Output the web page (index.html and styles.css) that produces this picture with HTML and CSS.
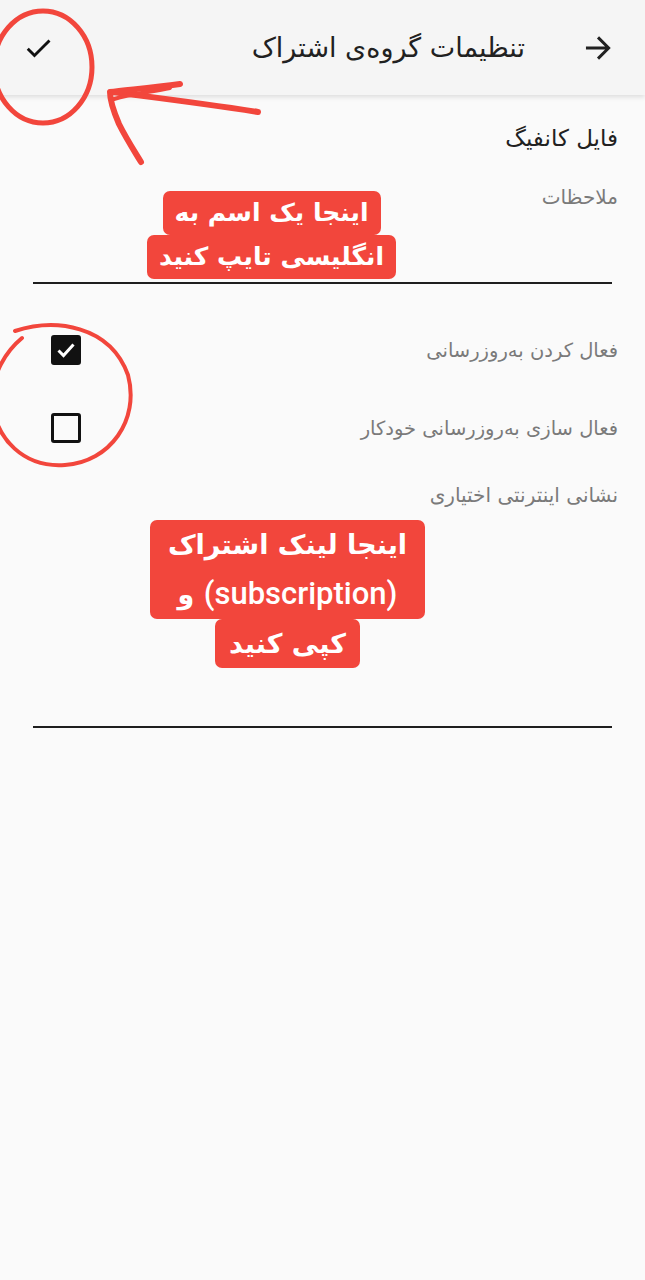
FILE: index.html
```html
<!DOCTYPE html>
<html lang="fa" dir="rtl">
<head>
<meta charset="utf-8">
<link rel="stylesheet" href="styles.css">
</head>
<body>
<div class="page">
  <header class="appbar">
    <svg class="back" viewBox="0 0 24 24" width="34" height="34"><path d="M3.5 12h16M12 4.5l7.5 7.5-7.5 7.5" fill="none" stroke="#212121" stroke-width="2.1"/></svg>
    <h1 class="title">تنظیمات گروه‌ی اشتراک</h1>
    <svg class="done" viewBox="0 0 24 24" width="36" height="36"><path d="M4.5 12.5l4.5 4.5 10-10" fill="none" stroke="#111" stroke-width="1.9"/></svg>
  </header>

  <main class="content">
    <div class="config">فایل کانفیگ</div>

    <section class="field field-remarks">
      <div class="label">ملاحظات</div>
      <div class="line"></div>
    </section>

    <div class="row row-first">
      <span class="row-text">فعال کردن به‌روزرسانی</span>
      <span class="box checked"><svg viewBox="0 0 24 24" width="24" height="24"><path d="M4.5 12.5l5 5 10-11" fill="none" stroke="#fff" stroke-width="3"/></svg></span>
    </div>
    <div class="row">
      <span class="row-text">فعال سازی به‌روزرسانی خودکار</span>
      <span class="box"></span>
    </div>

    <section class="field field-url">
      <div class="label">نشانی اینترنتی اختیاری</div>
      <div class="line"></div>
    </section>
  </main>

  <div class="note note-1">
    <div class="note-part">اینجا یک اسم به</div>
    <div class="note-part">انگلیسی تایپ کنید</div>
  </div>

  <div class="note note-2">
    <div class="note-part note-wide">
      <div>اینجا لینک اشتراک</div>
      <div><bdi class="latin">(subscription)</bdi> و</div>
    </div>
    <div class="note-part">کپی کنید</div>
  </div>

  <svg class="ink" width="645" height="1280" viewBox="0 0 645 1280">
    <g fill="none" stroke="#f2463c" stroke-linecap="round" stroke-linejoin="round">
      <ellipse cx="43" cy="67" rx="49" ry="56" stroke-width="5"/>
      <path d="M258 112 C 200 103, 150 97, 112 92" stroke-width="6"/>
      <path d="M180 84 C 150 88, 125 90, 110 92 C 110 100, 113 110, 119 124 C 127 140, 135 152, 141 162" stroke-width="6"/>
      <path d="M114 99 C 130 94, 150 92, 170 88" stroke-width="4"/>
      <path d="M15 331 C 55 318, 110 325, 128 375 C 140 420, 110 462, 65 465 C 25 468, -5 440, -8 400 C -8 375, 5 352, 22 338" stroke-width="4"/>
    </g>
  </svg>
</div>
</body>
</html>
```

FILE: styles.css
```css
* { box-sizing: border-box; }
html, body { margin: 0; padding: 0; }
body {
  background: #fafafa;
  font-family: "DejaVu Sans", "Noto Sans", sans-serif;
  color: #212121;
}
.page {
  position: relative;
  width: 645px;
  height: 1280px;
  overflow: hidden;
}
.appbar {
  height: 95px;
  background: #f5f5f5;
  box-shadow: 0 2px 5px rgba(0, 0, 0, 0.12);
  display: flex;
  align-items: center;
  padding: 0 30px 0 21px;
  position: relative;
  z-index: 1;
}
.back { flex: none; }
.title {
  margin: 0 56px 0 0;
  font-size: 27px;
  font-weight: normal;
  color: #212121;
  flex: 1;
}
.done { flex: none; }

.content {
  padding: 26px 27px 0 33px;
  display: flex;
  flex-direction: column;
}
.config {
  font-size: 23px;
  line-height: 34px;
  color: #212121;
}
.field {
  display: flex;
  flex-direction: column;
}
.label {
  font-size: 20px;
  color: #7a7a7a;
  line-height: 30px;
}
.line {
  height: 2px;
  background: #1e1e1e;
  margin-right: 6px;
}
.field-remarks { margin-top: 27px; }
.field-remarks .line { margin-top: 70px; }

.row {
  display: flex;
  align-items: center;
  justify-content: space-between;
  height: 78px;
}
.row-first { margin-top: 27px; }
.row-text {
  font-size: 19.5px;
  color: #7a7a7a;
}
.box {
  width: 30px;
  height: 30px;
  border: 3px solid #111;
  border-radius: 3px;
  margin-left: 18px;
  display: flex;
  align-items: center;
  justify-content: center;
  background: #fafafa;
}
.box.checked { background: #111; }
.field-url { margin-top: 13px; }
.field-url .line { margin-top: 216px; }

.note {
  position: absolute;
  display: flex;
  flex-direction: column;
  align-items: center;
  color: #fff;
  font-weight: bold;
  font-size: 25px;
  text-align: center;
}
.note-part {
  background: #f2463c;
  border-radius: 7px;
  padding: 0 12px;
}
.note-1 { top: 191px; left: 143px; width: 257px; }
.note-1 .note-part { line-height: 44px; }
.note-2 { top: 520px; left: 150px; width: 275px; font-size: 27px; }
.note-2 .note-part { line-height: 49px; padding: 0 14px; }
.note-2 .note-wide { padding: 0 6px; width: 275px; }
.latin {
  font-family: "Roboto", "Liberation Sans", sans-serif;
  font-weight: 500;
  font-size: 31px;
}

.ink {
  position: absolute;
  top: 0;
  left: 0;
  pointer-events: none;
  z-index: 2;
}
```
